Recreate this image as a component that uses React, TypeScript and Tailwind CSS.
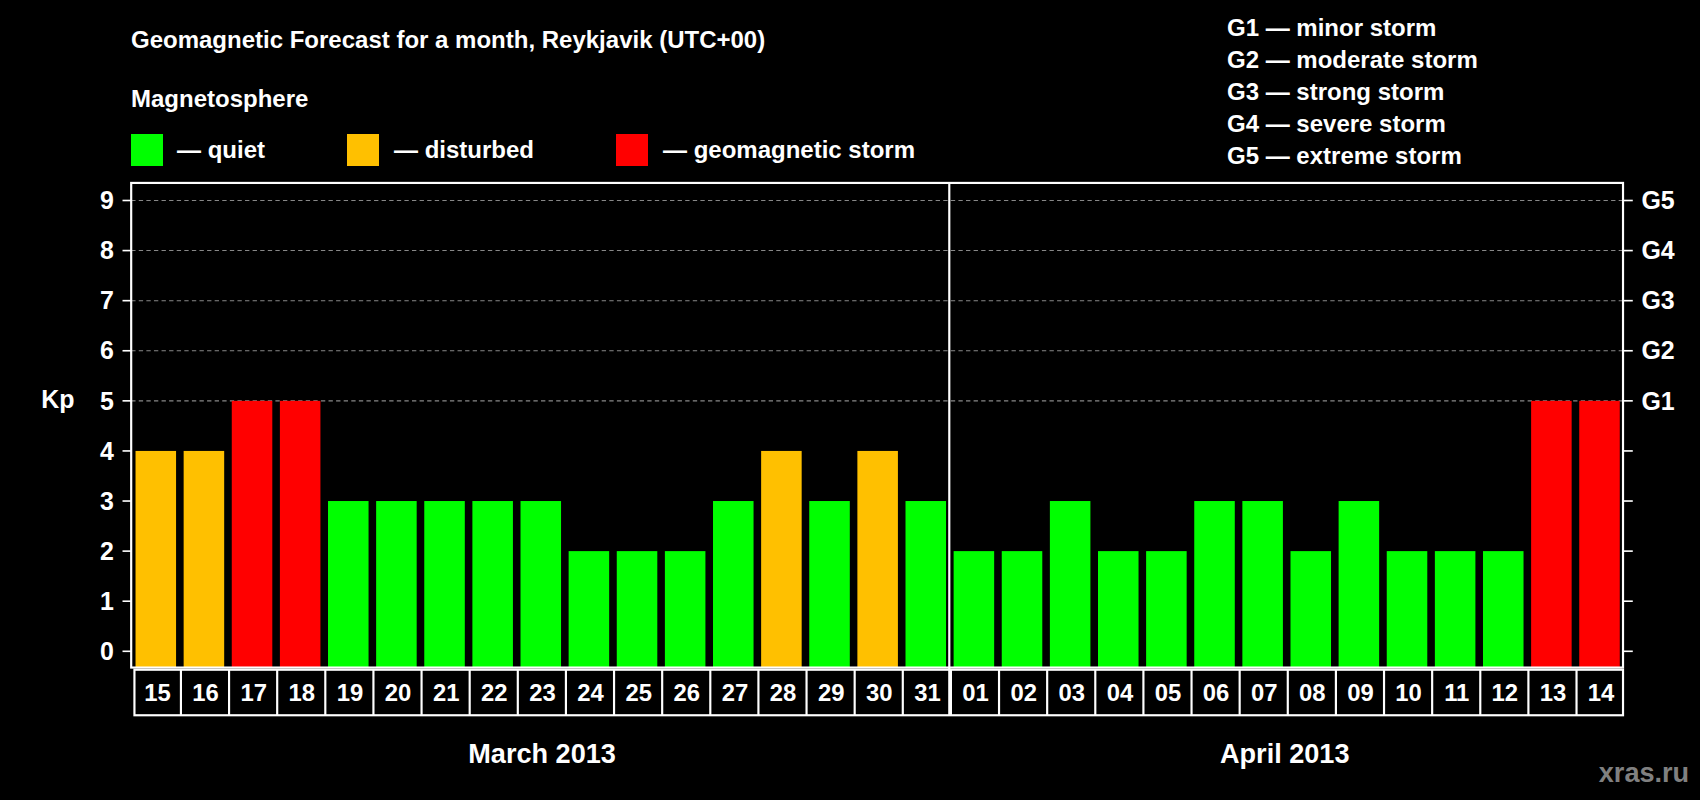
import React from "react";

const vals = [4,4,5,5,3,3,3,3,3,2,2,2,3,4,3,4,3,2,2,3,2,2,3,3,2,3,2,2,2,5,5];
const days = ["15","16","17","18","19","20","21","22","23","24","25","26","27","28","29","30","31","01","02","03","04","05","06","07","08","09","10","11","12","13","14"];

const L = 121, R = 1497, T = 169, B = 616;
const N = 31;
const pitch = (R - L) / N;
const y = (v: number) => 601 - v * 46.2;
const color = (v: number) => (v >= 5 ? "#ff0000" : v === 4 ? "#ffc000" : "#00ff00");

export default function App() {
  const font = { fontFamily: "'Liberation Sans', Arial, sans-serif", fontWeight: 700 };
  return (
    <div className="w-[1700px] h-[800px] bg-black text-white overflow-hidden" style={{ fontFamily: "'Liberation Sans', Arial, sans-serif" }}>
      <div className="flex h-[173px]">
        <div className="w-[1227px] pl-[131px] pt-[24px] font-bold">
          <div className="text-[24px] leading-[32px]">Geomagnetic Forecast for a month, Reykjavik (UTC+00)</div>
          <div className="text-[24px] leading-[32px] mt-[27px]">Magnetosphere</div>
          <div className="flex items-center mt-[17px] text-[24px]">
            <div className="w-[32px] h-[32px] bg-[#00ff00]" />
            <span className="ml-[14px] w-[170px]">— quiet</span>
            <div className="w-[32px] h-[32px] bg-[#ffc000]" />
            <span className="ml-[15px] w-[222px]">— disturbed</span>
            <div className="w-[32px] h-[32px] bg-[#ff0000]" />
            <span className="ml-[15px]">— geomagnetic storm</span>
          </div>
        </div>
        <div className="pt-[12px] font-bold text-[24px] leading-[32px]">
          <div>G1 — minor storm</div>
          <div>G2 — moderate storm</div>
          <div>G3 — strong storm</div>
          <div>G4 — severe storm</div>
          <div>G5 — extreme storm</div>
        </div>
      </div>
      <svg width="1700" height="627" viewBox="0 160 1568 578" style={font}>
        {[5,6,7,8,9].map(v => (
          <line key={v} x1={L} x2={R} y1={y(v)} y2={y(v)} stroke="#888" strokeDasharray="4 3" strokeWidth="1" />
        ))}
        {vals.map((v, i) => (
          <rect key={i} x={L + i * pitch + 4} y={y(v)} width={pitch - 7} height={B - y(v)} fill={color(v)} />
        ))}
        <rect x={L} y={T} width={R - L} height={B - T} fill="none" stroke="#fff" strokeWidth="2" />
        {Array.from({ length: 10 }, (_, v) => (
          <g key={v}>
            <line x1={L - 8} x2={L} y1={y(v)} y2={y(v)} stroke="#fff" strokeWidth="1.5" />
            <line x1={R} x2={R + 9} y1={y(v)} y2={y(v)} stroke="#fff" strokeWidth="1.5" />
            <text x={105} y={y(v) + 8} fontSize="23" fill="#fff" textAnchor="end">{v}</text>
          </g>
        ))}
        {["G1","G2","G3","G4","G5"].map((g, i) => (
          <text key={g} x={1514} y={y(5 + i) + 8} fontSize="23" fill="#fff">{g}</text>
        ))}
        <text x={38} y={377} fontSize="23" fill="#fff">Kp</text>
        <line x1={L + 17 * pitch} x2={L + 17 * pitch} y1={T} y2={660} stroke="#fff" strokeWidth="2" />
        <rect x={L + 3} y={618} width={R - L - 3} height={42} fill="none" stroke="#fff" strokeWidth="2" />
        {days.map((d, i) => (
          <g key={i}>
            {i > 0 && <line x1={L + i * pitch + 1.5} x2={L + i * pitch + 1.5} y1={618} y2={660} stroke="#fff" strokeWidth="2" />}
            <text x={L + i * pitch + pitch / 2 + 2} y={647} fontSize="22" fill="#fff" textAnchor="middle">{d}</text>
          </g>
        ))}
        <text x={500} y={704} fontSize="25" fill="#fff" textAnchor="middle">March 2013</text>
        <text x={1185} y={704} fontSize="25" fill="#fff" textAnchor="middle">April 2013</text>
        <text x={1558} y={722} fontSize="25" fill="#808080" textAnchor="end">xras.ru</text>
      </svg>
    </div>
  );
}
